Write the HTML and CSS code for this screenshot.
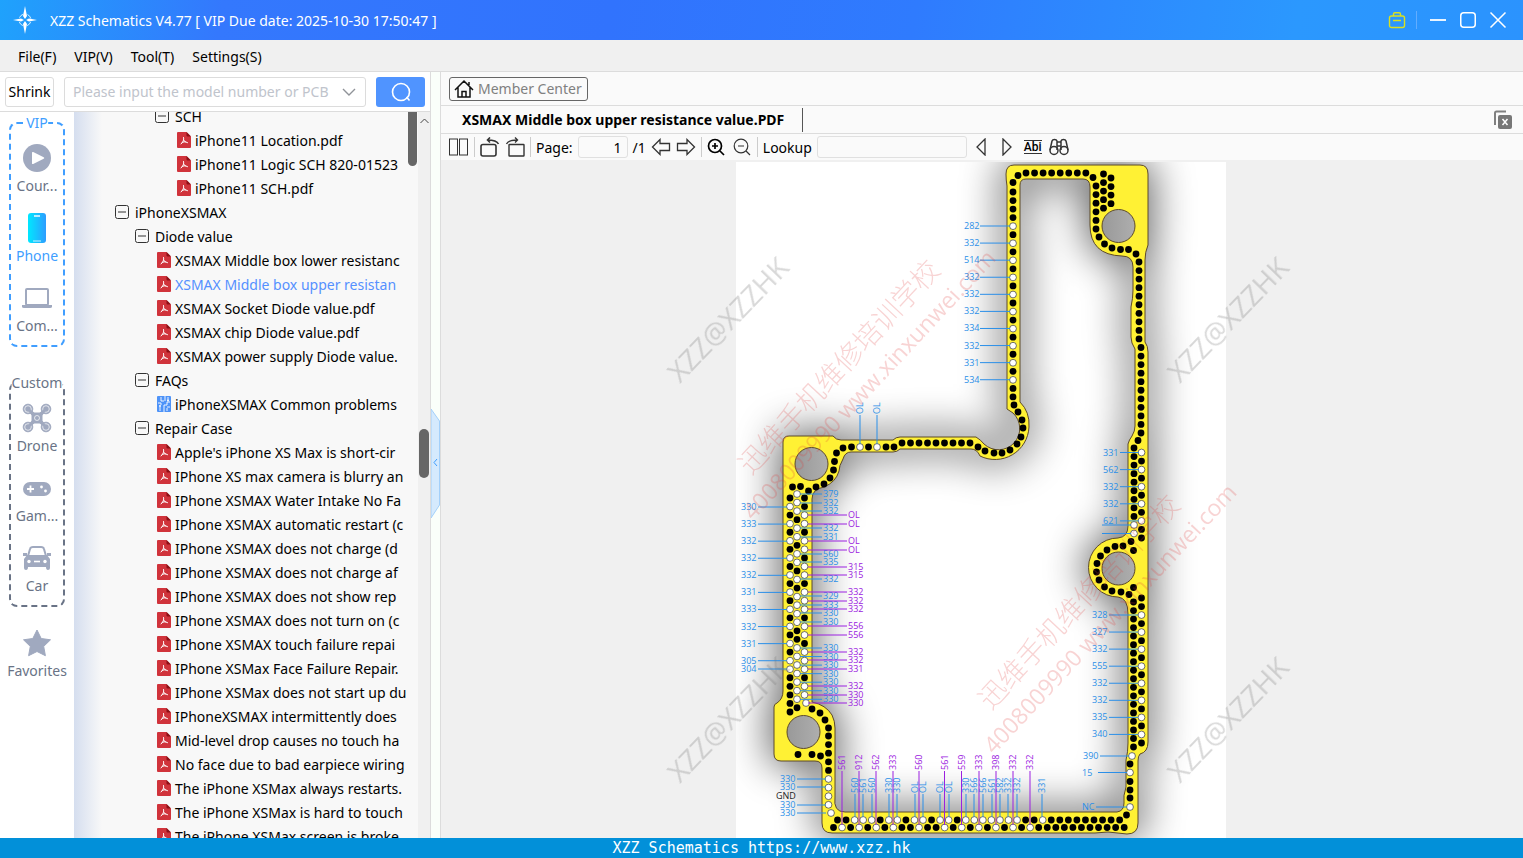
FILE: index.html
```html
<!DOCTYPE html>
<html lang="en">
<head>
  <meta charset="UTF-8" />
  <meta name="viewport" content="width=device-width, initial-scale=1.0" />
  <title>XZZ Schematics</title>
  <link rel="stylesheet" href="styles.css">
</head>
<body>

  <!-- shared icons -->
  <svg class="sprite" width="0" height="0" aria-hidden="true">
    <symbol id="i-pdf" viewBox="0 0 14 16">
      <path d="M1 0h8.500L14 4.500V15a1 1 0 0 1-1 1H1a1 1 0 0 1-1-1V1a1 1 0 0 1 1-1z" fill="#d0333b"/>
      <path d="M9.500 0L14 4.500h-3.500a1 1 0 0 1-1-1z" fill="#8c1016"/>
      <path d="M6.600 5.500c.8 2-.8 5-2.600 6.500M7 8.500c.6 1.200 1.900 2 3.500 2.200M5 10.600c1.300-.7 2.700-1 4-.8" fill="none" stroke="#fff" stroke-linecap="round"/>
    </symbol>
    <symbol id="i-pcb" viewBox="0 0 14 16">
      <rect width="14" height="16" rx="1" fill="#4e93f8"/>
      <path d="M4 1v4h3M8 0v5M1 7h3v2M11 1v3M13 6h-3v3H7v7M3 11v4M10 12v3M13 11h-3" fill="none" stroke="#fff" stroke-width=".9"/>
      <circle cx="3" cy="10" r="1" fill="#fff"/><circle cx="11" cy="4.500" r="1" fill="#fff"/>
    </symbol>
    <symbol id="i-minus" viewBox="0 0 14 14">
      <rect x=".5" y=".5" width="13" height="13" rx="2" fill="none" stroke="#333"/>
      <path d="M3 7h8" stroke="#333"/>
    </symbol>
  </svg>

  <header class="titlebar">
    <svg class="logo" width="24" height="30" viewBox="0 0 24 30">
      <path d="M12 1l2 10-2 3-2-3zM12 29l2-10-2-3-2 3zM0 15l8-1.500 3 1.500-3 1.500zM24 15l-8-1.500-3 1.500 3 1.500z" fill="#fff"/>
      <circle cx="12" cy="15" r="6" fill="none" stroke="#d6f1ff" stroke-dasharray="5 4.400" stroke-dashoffset="-2"/>
    </svg>
    <h1>XZZ Schematics V4.77 [ VIP Due date: 2025-10-30 17:50:47 ]</h1>
    <div class="window-buttons">
      <button class="kit" aria-label="Toolbox">
        <svg width="18" height="18" viewBox="0 0 18 18" fill="none" stroke="#d9e021" stroke-width="1.400"><rect x="1.500" y="5" width="15" height="11.500" rx="2"/><path d="M5.500 5V3q0-1.300 1.300-1.300h4.400q1.300 0 1.300 1.300v2M5 9.500h8"/></svg>
      </button>
      <button aria-label="Minimize">
        <svg width="18" height="18" viewBox="0 0 18 18"><path d="M1 9h16" stroke="#fff" stroke-width="1.800"/></svg>
      </button>
      <button aria-label="Maximize">
        <svg width="18" height="18" viewBox="0 0 18 18"><rect x="1.750" y="1.750" width="14.500" height="14.500" rx="3" fill="none" stroke="#fff" stroke-width="1.500"/></svg>
      </button>
      <button aria-label="Close">
        <svg width="18" height="18" viewBox="0 0 18 18"><path d="M1.500 1.500l15 15M16.500 1.500l-15 15" stroke="#fff" stroke-width="1.500"/></svg>
      </button>
    </div>
  </header>

  <nav class="menubar">
    <button>File(F)</button>
    <button>VIP(V)</button>
    <button>Tool(T)</button>
    <button>Settings(S)</button>
  </nav>

  <main>
    <aside class="left">
      <form class="search">
        <button type="button" class="shrink">Shrink</button>
        <div class="combo">
          <input type="text" aria-label="Model number" placeholder="Please input the model number or PCB">
          <svg width="14" height="8" viewBox="0 0 14 8"><path d="M1 1l6 6 6-6" fill="none" stroke="#909399" stroke-width="1.400"/></svg>
        </div>
        <button type="button" class="go" aria-label="Search">
          <svg width="20" height="20" viewBox="0 0 20 20" fill="none" stroke="#fff" stroke-width="1.600"><circle cx="10" cy="10" r="8.500"/><path d="M15.500 15l3 3.500"/></svg>
        </button>
      </form>

      <div class="browser">
        <nav class="rail">
          <div class="group vip">
            <span class="group-name">VIP</span>
            <button>
              <svg width="30" height="30" viewBox="0 0 30 30"><circle cx="15" cy="15" r="14" fill="#a0a9bf"/><path d="M10 9.800v10.400q0 1.200 1.200.7l10.500-5.200q1.200-.7 0-1.400L11.200 9.100q-1.200-.5-1.200.7z" fill="#fff"/></svg>
              Cour...
            </button>
            <button class="active">
              <svg width="30" height="30" viewBox="0 0 30 30"><defs><linearGradient id="ph"><stop offset="0" stop-color="#00e8ff"/><stop offset="1" stop-color="#2d9dff"/></linearGradient></defs><rect x="6" y="0" width="18" height="30" rx="3" fill="url(#ph)"/><path d="M12 3h6" stroke="#fff" stroke-width="1.400"/><path d="M11 28h8" stroke="#fff" stroke-width=".8"/></svg>
              Phone
            </button>
            <button>
              <svg width="30" height="30" viewBox="0 0 30 30"><rect x="4" y="6" width="22" height="16" rx="1" fill="none" stroke="#a0a9bf" stroke-width="2"/><path d="M0 22h30v1.500q0 1.500-2 1.500H2q-2 0-2-1.500z" fill="#a0a9bf"/></svg>
              Com...
            </button>
          </div>
          <div class="group custom">
            <span class="group-name">Custom</span>
            <button>
              <svg width="30" height="30" viewBox="0 0 30 30" fill="none" stroke="#a0a9bf"><path d="M6 6l6 6M24 6l-6 6M6 24l6-6M24 24l-6-6" stroke-width="3.500"/><rect x="10" y="10" width="10" height="10" rx="2" fill="#a0a9bf"/><g fill="#a0a9bf"><circle cx="6" cy="6" r="4.800"/><circle cx="24" cy="6" r="4.800"/><circle cx="6" cy="24" r="4.800"/><circle cx="24" cy="24" r="4.800"/></g><g stroke="#fff" stroke-width=".7"><circle cx="6" cy="6" r="3.300"/><circle cx="24" cy="6" r="3.300"/><circle cx="6" cy="24" r="3.300"/><circle cx="24" cy="24" r="3.300"/><circle cx="15" cy="15" r="2.500"/></g><path d="M6 6l5 5M24 6l-5 5M6 24l5-5M24 24l-5-5" stroke-width="2.500"/></svg>
              Drone
            </button>
            <button>
              <svg width="30" height="30" viewBox="0 0 30 30"><rect x="1" y="9" width="28" height="14" rx="7" fill="#a0a9bf"/><path d="M5 16h7M8.500 12.500v7" stroke="#fff" stroke-width="1.800"/><circle cx="19.500" cy="14" r="1.400" fill="#fff"/><circle cx="23.500" cy="18" r="1.400" fill="#fff"/></svg>
              Gam...
            </button>
            <button>
              <svg width="30" height="30" viewBox="0 0 30 30"><path d="M6 13l2-7q.5-2 3-2h8q2.500 0 3 2l2 7" fill="none" stroke="#a0a9bf" stroke-width="2"/><path d="M5 12h20l3 4v9q0 2-2 2t-2-3H6q0 3-2 3t-2-2v-9zM1 10h4v3H1zM25 10h4v3h-4z" fill="#a0a9bf"/><circle cx="7" cy="18.500" r="1.700" fill="#fff"/><circle cx="23" cy="18.500" r="1.700" fill="#fff"/><path d="M12 18.500h6" stroke="#fff" stroke-width="1.600"/></svg>
              Car
            </button>
          </div>
          <button class="favorites">
            <svg width="30" height="30" viewBox="0 0 30 30"><path d="M15 2l4.200 8.500 9.300 1.300-6.800 6.600 1.700 9.300L15 23.500l-8.400 4.200 1.700-9.300-6.800-6.600 9.300-1.300z" fill="#a0a9bf" stroke="#a0a9bf" stroke-linejoin="round"/></svg>
            Favorites
          </button>
        </nav>

        <div class="tree-pane">
          <ul class="tree" id="tree"></ul>
          <div class="inner-bar"><span class="thumb"></span></div>
          <div class="outer-bar">
            <svg width="9" height="6" viewBox="0 0 9 6"><path d="M.5 5l4-4 4 4" fill="none" stroke="#444"/></svg>
            <span class="thumb"></span>
          </div>
        </div>
      </div>
    </aside>

    <div class="splitter">
      <button aria-label="Collapse panel">
        <svg width="9" height="110" viewBox="0 0 9 110"><path d="M0 0l8.500 12v84L0 109z" fill="#d5eafd" stroke="#a3d0fa"/><path d="M6 50l-3 3.500 3 3.500" fill="none" stroke="#409eff"/></svg>
      </button>
    </div>

    <section class="viewer">
      <div class="member-row">
        <a href="#" class="member">
          <svg width="20" height="20" viewBox="0 0 20 20" fill="none" stroke="#111" stroke-width="1.500"><path d="M1 11l9-9 9 9M4 8.500V18h12V8.500M8 18v-5.500h4V18M15 6V3"/></svg>
          Member Center
        </a>
      </div>
      <div class="tab-row">
        <button class="tab">XSMAX Middle box upper resistance value.PDF</button>
        <button class="close-all" aria-label="Close all tabs">
          <svg width="20" height="20" viewBox="0 0 20 20"><path d="M2 15V3q0-1.500 1.500-1.500H13" fill="none" stroke="#808080" stroke-width="2"/><rect x="5" y="5" width="14" height="14" rx="2" fill="#777"/><path d="M9.500 9l5 6M14.500 9l-5 6" stroke="#fff" stroke-width="1.500"/></svg>
        </button>
      </div>
      <div class="tools">
        <button aria-label="Two pages"><svg width="20" height="18" viewBox="0 0 20 18" fill="none" stroke="#333"><rect x=".5" y="1" width="8" height="16"/><rect x="10.500" y="1" width="8" height="16"/></svg></button>
        <i class="sep"></i>
        <button aria-label="Rotate left"><svg width="20" height="20" viewBox="0 0 20 20" fill="none" stroke="#333" stroke-width="1.600"><rect x="1" y="7.500" width="15" height="11.500" rx="2"/><path d="M18.500 7q-2-4-11-4M10 .5L7.500 3 10 5.500"/></svg></button>
        <button aria-label="Rotate right"><svg width="20" height="20" viewBox="0 0 20 20" fill="none" stroke="#333" stroke-width="1.400"><rect x="4" y="7.500" width="15" height="11.500" rx=".5"/><path d="M1.500 7q2-4 11-4M10 .5l2.500 2.500L10 5.500"/></svg></button>
        <i class="sep"></i>
        <label for="page">Page:</label>
        <input id="page" type="text" value="1">
        <span class="total">/1</span>
        <button aria-label="Previous page"><svg width="20" height="18" viewBox="0 0 20 18" fill="none" stroke="#333" stroke-width="1.300"><path d="M1.500 9L9 1.500v4h9.500v7H9v4z"/></svg></button>
        <button aria-label="Next page"><svg width="20" height="18" viewBox="0 0 20 18" fill="none" stroke="#333" stroke-width="1.300"><path d="M18.500 9L11 1.500v4H1.500v7H11v4z"/></svg></button>
        <i class="sep"></i>
        <button aria-label="Zoom in"><svg width="20" height="18" viewBox="0 0 20 18" fill="none" stroke="#000" stroke-width="1.700"><circle cx="8" cy="8" r="6.500"/><path d="M13 13l4 4M5 8h6M8 5v6"/></svg></button>
        <button aria-label="Zoom out"><svg width="20" height="18" viewBox="0 0 20 18" fill="none" stroke="#333" stroke-width="1.200"><circle cx="9" cy="8" r="6.800"/><path d="M14 13l4 4M6 8h6"/></svg></button>
        <i class="sep"></i>
        <label for="lookup">Lookup</label>
        <input id="lookup" type="text">
        <button aria-label="Find previous"><svg width="20" height="18" viewBox="0 0 20 18" fill="none" stroke="#333" stroke-width="1.300"><path d="M13 1v16L5 9z"/></svg></button>
        <button aria-label="Find next"><svg width="20" height="18" viewBox="0 0 20 18" fill="none" stroke="#333" stroke-width="1.300"><path d="M6 1v16l8-8z"/></svg></button>
        <button class="abi">Abi</button>
        <button aria-label="Find all"><svg width="20" height="18" viewBox="0 0 20 18" fill="none" stroke="#333" stroke-width="1.500"><circle cx="5" cy="12.500" r="4"/><circle cx="15" cy="12.500" r="4"/><path d="M1 12L3 3q.5-1.500 2.500-1.500T8 3v9M19 12l-2-9q-.5-1.500-2.500-1.500T12 3v9M8 4h4M8 8h4"/></svg></button>
      </div>

      <div class="canvas">
        <svg class="sheet" width="490" height="676" viewBox="736 162 490 676" role="img" aria-label="XSMAX board map">
          <defs>
            <clipPath id="page-clip"><rect x="736" y="162" width="490" height="676"/></clipPath>
            <filter id="glow" x="-20%" y="-20%" width="140%" height="140%" color-interpolation-filters="sRGB"><feGaussianBlur stdDeviation="20"/></filter>
            <linearGradient id="hole" x1="0" x2="1"><stop offset="0" stop-color="#999"/><stop offset="1" stop-color="#aeaeae"/></linearGradient>
            <path id="board" d="M1014 165H1140Q1148 165 1148 174V245Q1145 252 1145 260V342Q1148 346 1148 352V742Q1148 752 1140 754Q1138 756 1138 761V823Q1138 834 1127 834L1108 832L1095 833H832Q822 833 822 823V768Q822 761 815 761H781Q774 761 774 754V707Q774 704 777 703Q783 699 783 691V442Q783 436 789 436H833Q836 440 841 440H893Q896 437 900 437H976Q981 440 984 444A20 20 0 1 0 1013 413L1007 409V186Q1006 180 1006 174Q1006 165 1014 165Z
              M1020 185V402Q1030 412 1029 427A34 34 0 0 1 980 456Q977 449 971 449H900Q897 452 893 452H851Q845 452 843 459Q839 466 839 471Q836 482 824 487Q812 489 812 499V702Q826 705 832 715Q835 721 835 728V797Q833 812 845 812H1117Q1124 811 1124 803Q1123 796 1126 787V760Q1128 752 1128 743V614Q1128 598 1118 597A29 29 0 0 1 1118 538Q1128 537 1128 526V444Q1129 440 1132 436Q1135 431 1135 426V349Q1131 343 1131 337V307Q1133 298 1133 290V267Q1133 256 1122 256Q1090 255 1090 225V187Q1090 179 1083 179H1026Q1020 179 1020 185Z"/>
          </defs>
          <rect x="736" y="162" width="490" height="676" fill="#fff"/>
          <g clip-path="url(#page-clip)">
            <use href="#board" class="shadow"/>
            <use href="#board" class="plate"/>
            <g class="holes">
              <circle cx="1118.500" cy="226" r="16.500"/>
              <circle cx="811.500" cy="464" r="16.500"/>
              <circle cx="803.500" cy="732" r="16.500"/>
              <circle cx="1118.500" cy="568.500" r="16.500"/>
            </g>
            <g id="pads"></g>
            <g id="labels"></g>
          </g>
          <g class="mark-red">
            <text class="zh" transform="translate(751 476) rotate(-47)">迅维手机维修培训学校</text>
            <text transform="translate(753 521) rotate(-47)">4008009990 www.xinxunwei.com</text>
            <text class="zh" transform="translate(991 711) rotate(-47)">迅维手机维修培训学校</text>
            <text transform="translate(994 755) rotate(-47)">4008009990 www.xinxunwei.com</text>
          </g>
          <g class="mark-grey">
            <text transform="translate(680 384) rotate(-46)">XZZ@XZZHK</text>
            <text transform="translate(1180 384) rotate(-46)">XZZ@XZZHK</text>
            <text transform="translate(680 784) rotate(-46)">XZZ@XZZHK</text>
            <text transform="translate(1180 784) rotate(-46)">XZZ@XZZHK</text>
          </g>
        </svg>
      </div>
    </section>
  </main>

  <footer>XZZ Schematics https://www.xzz.hk</footer>

  <script src="app.js"></script>
</body>
</html>
```
FILE: styles.css
```css
* {
  box-sizing: border-box;
}

body {
  margin: 0;
  height: 100vh;
  display: flex;
  flex-direction: column;
  overflow: hidden;
  font-family: "Noto Sans", "Noto Sans CJK SC", sans-serif;
  font-size: 14px;
  color: #000;
  background: #f0f0f0;
}

button,
input {
  font: inherit;
  color: inherit;
}

button {
  border: none;
  background: none;
  padding: 0;
}

svg {
  display: block;
  flex: none;
}

.sprite {
  position: absolute;
}

/* title + menu */
.titlebar {
  display: flex;
  align-items: center;
  height: 40px;
  flex: none;
  padding: 0 16px 0 13px;
  color: #fff;
  background: linear-gradient(100deg, #1fa2fc 0, #3478fd 220px, #3173fd 40%, #2f7bfe 60%, #2b98fe 85%, #2b93fe 100%);
}

.titlebar h1 {
  margin: 0 0 0 13px;
  font-size: 14px;
  font-weight: 400;
}

.window-buttons {
  display: flex;
  gap: 12px;
  margin-left: auto;
}

.window-buttons .kit {
  padding-right: 10px;
  border-right: 1px solid #62adff;
}

.menubar {
  display: flex;
  gap: 18px;
  height: 32px;
  flex: none;
  padding: 2px 18px 0;
  background: #f0f0f0;
  border-bottom: 1px solid #dcdcdc;
}

main {
  display: flex;
  flex: 1;
  min-height: 0;
}

/* left side */
.left {
  display: flex;
  flex-direction: column;
  width: 431px;
  flex: none;
  border-right: 1px solid #dcdcdc;
  background: #fff;
}

.search {
  display: flex;
  align-items: center;
  height: 40px;
  flex: none;
  padding: 0 5px;
  border-bottom: 1px solid #dcdcdc;
}

.shrink {
  width: 49px;
  height: 30px;
  border: 1px solid #dcdcdc;
  border-radius: 3px;
}

.combo {
  display: flex;
  align-items: center;
  flex: 1;
  height: 30px;
  margin: 0 10px;
  padding: 0 9px 0 8px;
  border: 1px solid #dcdcdc;
  border-radius: 3px;
}

.combo input {
  flex: 1;
  min-width: 0;
  border: none;
  padding: 0;
  background: none;
}

.combo input::placeholder {
  color: #c0c4cc;
}

.go {
  display: flex;
  align-items: center;
  justify-content: center;
  width: 49px;
  height: 30px;
  border-radius: 3px;
  background: #5094ff;
}

.browser {
  display: flex;
  flex: 1;
  min-height: 0;
}

.rail {
  width: 74px;
  flex: none;
  padding: 10px 9px 0;
  color: #697386;
}

.group {
  position: relative;
  width: 56px;
  padding-top: 19px;
  border: 2px dashed #409eff;
  border-radius: 8px;
}

.group.custom {
  margin-top: 35px;
  border-color: #697386;
}

.group-name {
  position: absolute;
  top: -11px;
  left: 50%;
  transform: translateX(-50%);
  background: #fff;
  line-height: 20px;
}

.vip .group-name {
  color: #409eff;
}

.rail button {
  display: flex;
  flex-direction: column;
  align-items: center;
  gap: 3px;
  width: 100%;
  height: 70px;
  line-height: 20px;
}

.rail button:last-child {
  height: 62px;
}

.rail .active {
  color: #409eff;
}

.rail .favorites {
  margin-top: 21px;
}

.tree-pane {
  display: flex;
  flex: 1;
  min-width: 0;
  overflow: hidden;
  background: linear-gradient(90deg, #d5deef 0, #f8f8f8 28px);
}

.tree {
  flex: 1;
  min-width: 0;
  margin: -8px 2px 0 0;
  padding: 0;
  list-style: none;
  overflow: hidden;
}

.tree li {
  display: flex;
  align-items: center;
  height: 24px;
  white-space: nowrap;
}

.tree .l1 { padding-left: 41px; }
.tree .l2 { padding-left: 61px; }
.tree .l3 { padding-left: 81px; }
.tree .l4 { padding-left: 101px; }

.tree svg {
  width: 14px;
  height: 14px;
  margin-right: 6px;
}

.tree .doc svg {
  width: 16px;
  height: 16px;
  margin: 0 3px 0 1px;
}

.tree .selected {
  color: #5590ff;
}

.thumb {
  display: block;
  background: #666;
}

.inner-bar {
  width: 10px;
}

.inner-bar .thumb {
  width: 9px;
  height: 54px;
  border-radius: 0 0 5px 5px;
}

.outer-bar {
  display: flex;
  flex-direction: column;
  align-items: center;
  width: 12px;
  padding-top: 6px;
  background: #f0f0f0;
}

.outer-bar .thumb {
  width: 10px;
  height: 49px;
  margin-top: 305px;
  border-radius: 5px;
}

.splitter {
  display: flex;
  align-items: center;
  width: 10px;
  flex: none;
  padding-top: 18px;
  border-right: 1px solid #dcdcdc;
  background: #fafffa;
}

/* viewer */
.viewer {
  display: flex;
  flex-direction: column;
  flex: 1;
  min-width: 0;
  background: #fafafa;
}

.member-row {
  display: flex;
  align-items: center;
  height: 34px;
  flex: none;
  padding: 0 8px;
  border-bottom: 1px solid #dcdcdc;
}

.member {
  display: flex;
  align-items: center;
  gap: 4px;
  height: 24px;
  padding: 0 5px 0 4px;
  border: 1px solid #666;
  border-radius: 3px;
  color: #808080;
  text-decoration: none;
}

.tab-row {
  display: flex;
  align-items: center;
  justify-content: space-between;
  height: 28px;
  flex: none;
  padding: 0 10px 0 8px;
  border-bottom: 1px solid #dcdcdc;
}

.tab {
  height: 24px;
  padding: 0 18px 0 13px;
  border-right: 1px solid #555;
  font-weight: 700;
}

.tools {
  display: flex;
  align-items: center;
  gap: 5px;
  height: 26px;
  flex: none;
  padding: 0 8px;
}

.tools .sep {
  width: 1px;
  height: 20px;
  background: #ccc;
}

.tools input {
  height: 22px;
  border: 1px solid #e0e0e0;
  border-radius: 3px;
  background: #fafafa;
}

#page {
  width: 50px;
  text-align: right;
  padding: 0 5px;
}

#lookup {
  width: 150px;
}

.abi {
  margin: 0 2px;
  border-top: 1px solid #333;
  border-bottom: 1px solid #333;
  font-family: Roboto, sans-serif;
  font-size: 12px;
  font-weight: 500;
  line-height: 12px;
}

.canvas {
  display: flex;
  flex: 1;
  min-height: 0;
  padding: 2px 2px 0 0;
  justify-content: center;
  overflow: hidden;
  background: #f0f0f0;
}

.sheet {
  overflow: visible;
}

.shadow {
  fill: #000;
  fill-rule: evenodd;
  stroke: #000;
  stroke-width: 10px;
  filter: url(#glow);
  opacity: .6;
}

.plate {
  fill: #fff134;
  fill-rule: evenodd;
  stroke: #5d4a2a;
}

.holes circle {
  fill: url(#hole);
  stroke: #5d4a2a;
}

#pads .w {
  fill: #fff;
  stroke: #333;
  stroke-width: .7px;
}

#labels {
  font-family: "Open Sans", sans-serif;
  font-size: 9px;
}

#labels .blue { fill: #2b8fe8; }
#labels .purple { fill: #9b20e0; }
#labels .black { fill: #222; }
#labels line.blue { stroke: #2b8fe8; }
#labels line.purple { stroke: #9b20e0; }

.mark-red {
  font-family: "Open Sans", sans-serif;
  font-size: 23px;
  fill: #e03c3c;
  opacity: .22;
}

.mark-red .zh {
  font-family: "Noto Sans CJK SC", sans-serif;
  font-size: 28px;
  font-weight: 300;
}

.mark-grey {
  font-family: "Open Sans", sans-serif;
  font-size: 28px;
  fill: #777;
  opacity: .28;
}

footer {
  height: 20px;
  flex: none;
  line-height: 20px;
  text-align: center;
  color: #fff;
  background: #0290d9;
  font-family: "DejaVu Sans Mono", monospace;
  font-size: 15px;
}
```
FILE: app.js
```js
// file tree: [level, kind, text]
const rows = [
  [3, "dir", "SCH"],
  [4, "pdf", "iPhone11 Location.pdf"],
  [4, "pdf", "iPhone11 Logic SCH 820-01523"],
  [4, "pdf", "iPhone11 SCH.pdf"],
  [1, "dir", "iPhoneXSMAX"],
  [2, "dir", "Diode value"],
  [3, "pdf", "XSMAX Middle box lower resistanc"],
  [3, "pdf", "XSMAX Middle box upper resistan", true],
  [3, "pdf", "XSMAX Socket Diode value.pdf"],
  [3, "pdf", "XSMAX chip Diode value.pdf"],
  [3, "pdf", "XSMAX power supply Diode value."],
  [2, "dir", "FAQs"],
  [3, "pcb", "iPhoneXSMAX Common problems"],
  [2, "dir", "Repair Case"],
  [3, "pdf", "Apple's iPhone XS Max is short-cir"],
  [3, "pdf", "IPhone XS max camera is blurry an"],
  [3, "pdf", "IPhone XSMAX Water Intake No Fa"],
  [3, "pdf", "IPhone XSMAX automatic restart (c"],
  [3, "pdf", "IPhone XSMAX does not charge (d"],
  [3, "pdf", "IPhone XSMAX does not charge af"],
  [3, "pdf", "IPhone XSMAX does not show rep"],
  [3, "pdf", "IPhone XSMAX does not turn on (c"],
  [3, "pdf", "IPhone XSMAX touch failure repai"],
  [3, "pdf", "IPhone XSMax Face Failure Repair."],
  [3, "pdf", "IPhone XSMax does not start up du"],
  [3, "pdf", "IPhoneXSMAX intermittently does"],
  [3, "pdf", "Mid-level drop causes no touch ha"],
  [3, "pdf", "No face due to bad earpiece wiring"],
  [3, "pdf", "The iPhone XSMax always restarts."],
  [3, "pdf", "The iPhone XSMax is hard to touch"],
  [3, "pdf", "The iPhone XSMax screen is broke"]
];

document.getElementById("tree").innerHTML = rows.map(([level, kind, text, selected]) => {
  const icon = kind === "dir" ? "minus" : kind;
  const cls = `l${level}${kind === "dir" ? "" : " doc"}${selected ? " selected" : ""}`;
  return `<li class="${cls}"><svg><use href="#i-${icon}"/></svg>${text}</li>`;
}).join("");

// board pads
const pads = [];
const pad = (x, y, white) => pads.push(`<circle cx="${x}" cy="${y}" r="3.400"${white ? ' class="w"' : ""}/>`);
const column = (x, y, step, count, white = []) => {
  for (let i = 0; i < count; i++) pad(x, y + i * step, white.includes(i));
};
const line = (x, y, step, count, white = []) => {
  for (let i = 0; i < count; i++) pad(x + i * step, y, white.includes(i));
};
const black = list => list.forEach(([x, y]) => pad(x, y));
const white = list => list.forEach(([x, y]) => pad(x, y, true));

line(1026, 173, 8.55, 8);
column(1013, 192, 8.54, 25, [4, 6, 8, 10, 12, 14, 16, 18, 20, 22]);
column(1096, 186, 8.6, 6);
column(1103.5, 174, 8.55, 5);
column(1111, 178, 8.55, 4);
column(1139, 262, 8.55, 10);
column(1141, 347.5, 8.55, 11);
column(1134, 448, 8.55, 11, [9, 10]);
column(1141.5, 452.5, 8.55, 11, [0, 2, 4, 6, 8]);
column(1141.5, 598, 8.53, 18, [2, 4, 6, 8, 10, 12, 14, 16]);
column(1133.5, 602, 8.53, 18);
line(837.5, 820, 8.55, 34, [2, 3, 4, 6, 7, 9, 10, 12, 13, 15, 16, 17, 18, 19, 20, 21, 24]);
line(833.5, 827.5, 8.55, 35, [1, 3, 5, 7, 10, 13, 15, 17, 19, 21, 23]);
column(790, 498, 8.56, 26, [1, 3, 5, 7, 9, 11, 13, 15, 17, 19, 20]);
column(797, 494, 8.55, 26, [0, 1, 2, 4, 5, 7, 8, 10, 12, 13, 14, 15, 18, 19, 20, 21, 22, 23, 24]);
column(804.5, 498, 8.56, 24, [2, 3, 5, 6, 8, 9, 11, 12, 13, 15, 16, 18, 19, 20, 22, 23]);
line(902, 443, 8.5, 9);
column(828.5, 736, 8.6, 9, [5, 6, 7, 8]);
black([
  [1018, 175.5], [1013, 182.5], [1093, 177.5],
  [1099, 237], [1104.5, 244], [1112, 248], [1120.5, 249.5], [1128.5, 249.5], [1136, 254],
  [1138, 440.5], [1131, 541.5], [1133.5, 550.5],
  [1123, 546], [1115, 546.5], [1107, 550], [1100.5, 556], [1097, 563.5], [1096.5, 572],
  [1099, 580], [1104.5, 587], [1112, 591], [1121, 592], [1129, 594.5], [1133.5, 587.5],
  [1130, 764], [1130, 781.5], [1130, 790], [1130, 798], [1126.5, 815],
  [792.5, 487], [800.5, 486.5], [808.5, 491], [816, 487], [824, 484], [830, 478], [833.5, 470],
  [834.5, 461.5], [836.5, 453], [843, 448], [851.5, 447], [868.5, 447], [886, 447], [894, 447],
  [978, 447], [985, 451], [994, 453], [1002, 453], [1010, 450], [1017, 444], [1021, 437],
  [1023, 428], [1022, 420], [1018, 412], [1014, 405],
  [812, 709], [820, 713], [825, 720], [828.5, 728],
  [798, 754.5], [812, 754.5], [820.5, 756]
]);
white([[860, 447], [877, 447], [1132, 756], [1130, 772.5], [1130, 807], [806, 703], [831, 813]]);
document.getElementById("pads").innerHTML = pads.join("");

// readings next to the pads
const labels = [];
const across = (color, textX, x1, x2, list) => list.forEach(([y, text]) => {
  if (color !== "black") labels.push(`<line class="${color}" x1="${x1}" x2="${x2}" y1="${y}" y2="${y}"/>`);
  labels.push(`<text class="${color}" x="${textX}" y="${y + 3}">${text}</text>`);
});
const upright = (color, textY, y2, list) => list.forEach(([x, text]) => {
  labels.push(`<line class="${color}" x1="${x}" x2="${x}" y1="${textY + 1}" y2="${y2}"/>`);
  labels.push(`<text class="${color}" transform="translate(${x + 3} ${textY}) rotate(-90)">${text}</text>`);
});
const spaced = (y, step, texts) => texts.map((t, i) => [y + i * step, t]);

across("blue", 964, 980, 1010, spaced(226, 17.08, [282, 332, 514, 332, 332, 332, 334, 332, 331, 534]));
across("blue", 741, 758, 787, [...spaced(507, 17.08, [330, 333, 332, 332, 332, 331, 333, 332, 331, 305]), [669, 304]]);
across("blue", 823, 800, 822, [
  [494, 379], [503, 332], [511, 332], [528, 332], [537, 331], [554, 560], [562, 335], [579, 332],
  [596, 329], [605, 333], [613, 330], [622, 330],
  ...spaced(648, 8.55, [330, 330, 330, 330, 330, 330, 330])
]);
across("purple", 848, 808, 847, [
  [515, "OL"], [524, "OL"], [541, "OL"], [550, "OL"], [567, 315], [575, 315], [592, 332], [601, 332],
  [609, 332], [626, 556], [635, 556], [652, 332], [660, 332], [669, 331], [686, 332], [695, 330], [703, 330]
]);
across("blue", 780, 797, 826, [[779, 330], [787, 330], [805, 330], [813, 330]]);
across("black", 776, 0, 0, [[796, "GND"]]);
across("blue", 1103, 1120, 1139, spaced(452.5, 17.1, [331, 562, 332, 332, 621]));
across("blue", 1104, 1102, 1131, [[525, ""], [533.5, ""]]);
across("blue", 1092, 1109, 1138, spaced(615, 17.06, [328, 327, 332, 555, 332, 332, 335, 340]));
across("blue", 1083, 1100, 1129, [[756, 390]]);
across("blue", 1082, 1098, 1127, [[772.5, 15]]);
across("blue", 1082, 1096, 1127, [[807, "NC"]]);
upright("blue", 414, 444, [[860, "OL"], [877, "OL"]]);
upright("blue", 793, 817, [
  [855, 560], [863, 561], [872, 560], [889, 330], [897, 330], [915, "OL"], [923, "OL"], [940, "OL"], [949, "OL"],
  [966, 330], [974, 566], [983, 566], [992, 561], [1000, 582], [1008, 332], [1017, 332], [1042, 331]
]);
upright("purple", 770, 825, [
  [842, 561], [859, 912], [876, 562], [893, 333], [919, 560], [944.5, 561], [961.5, 559],
  [979, 333], [996, 398], [1013, 332], [1030, 332]
]);
document.getElementById("labels").innerHTML = labels.join("");
```
